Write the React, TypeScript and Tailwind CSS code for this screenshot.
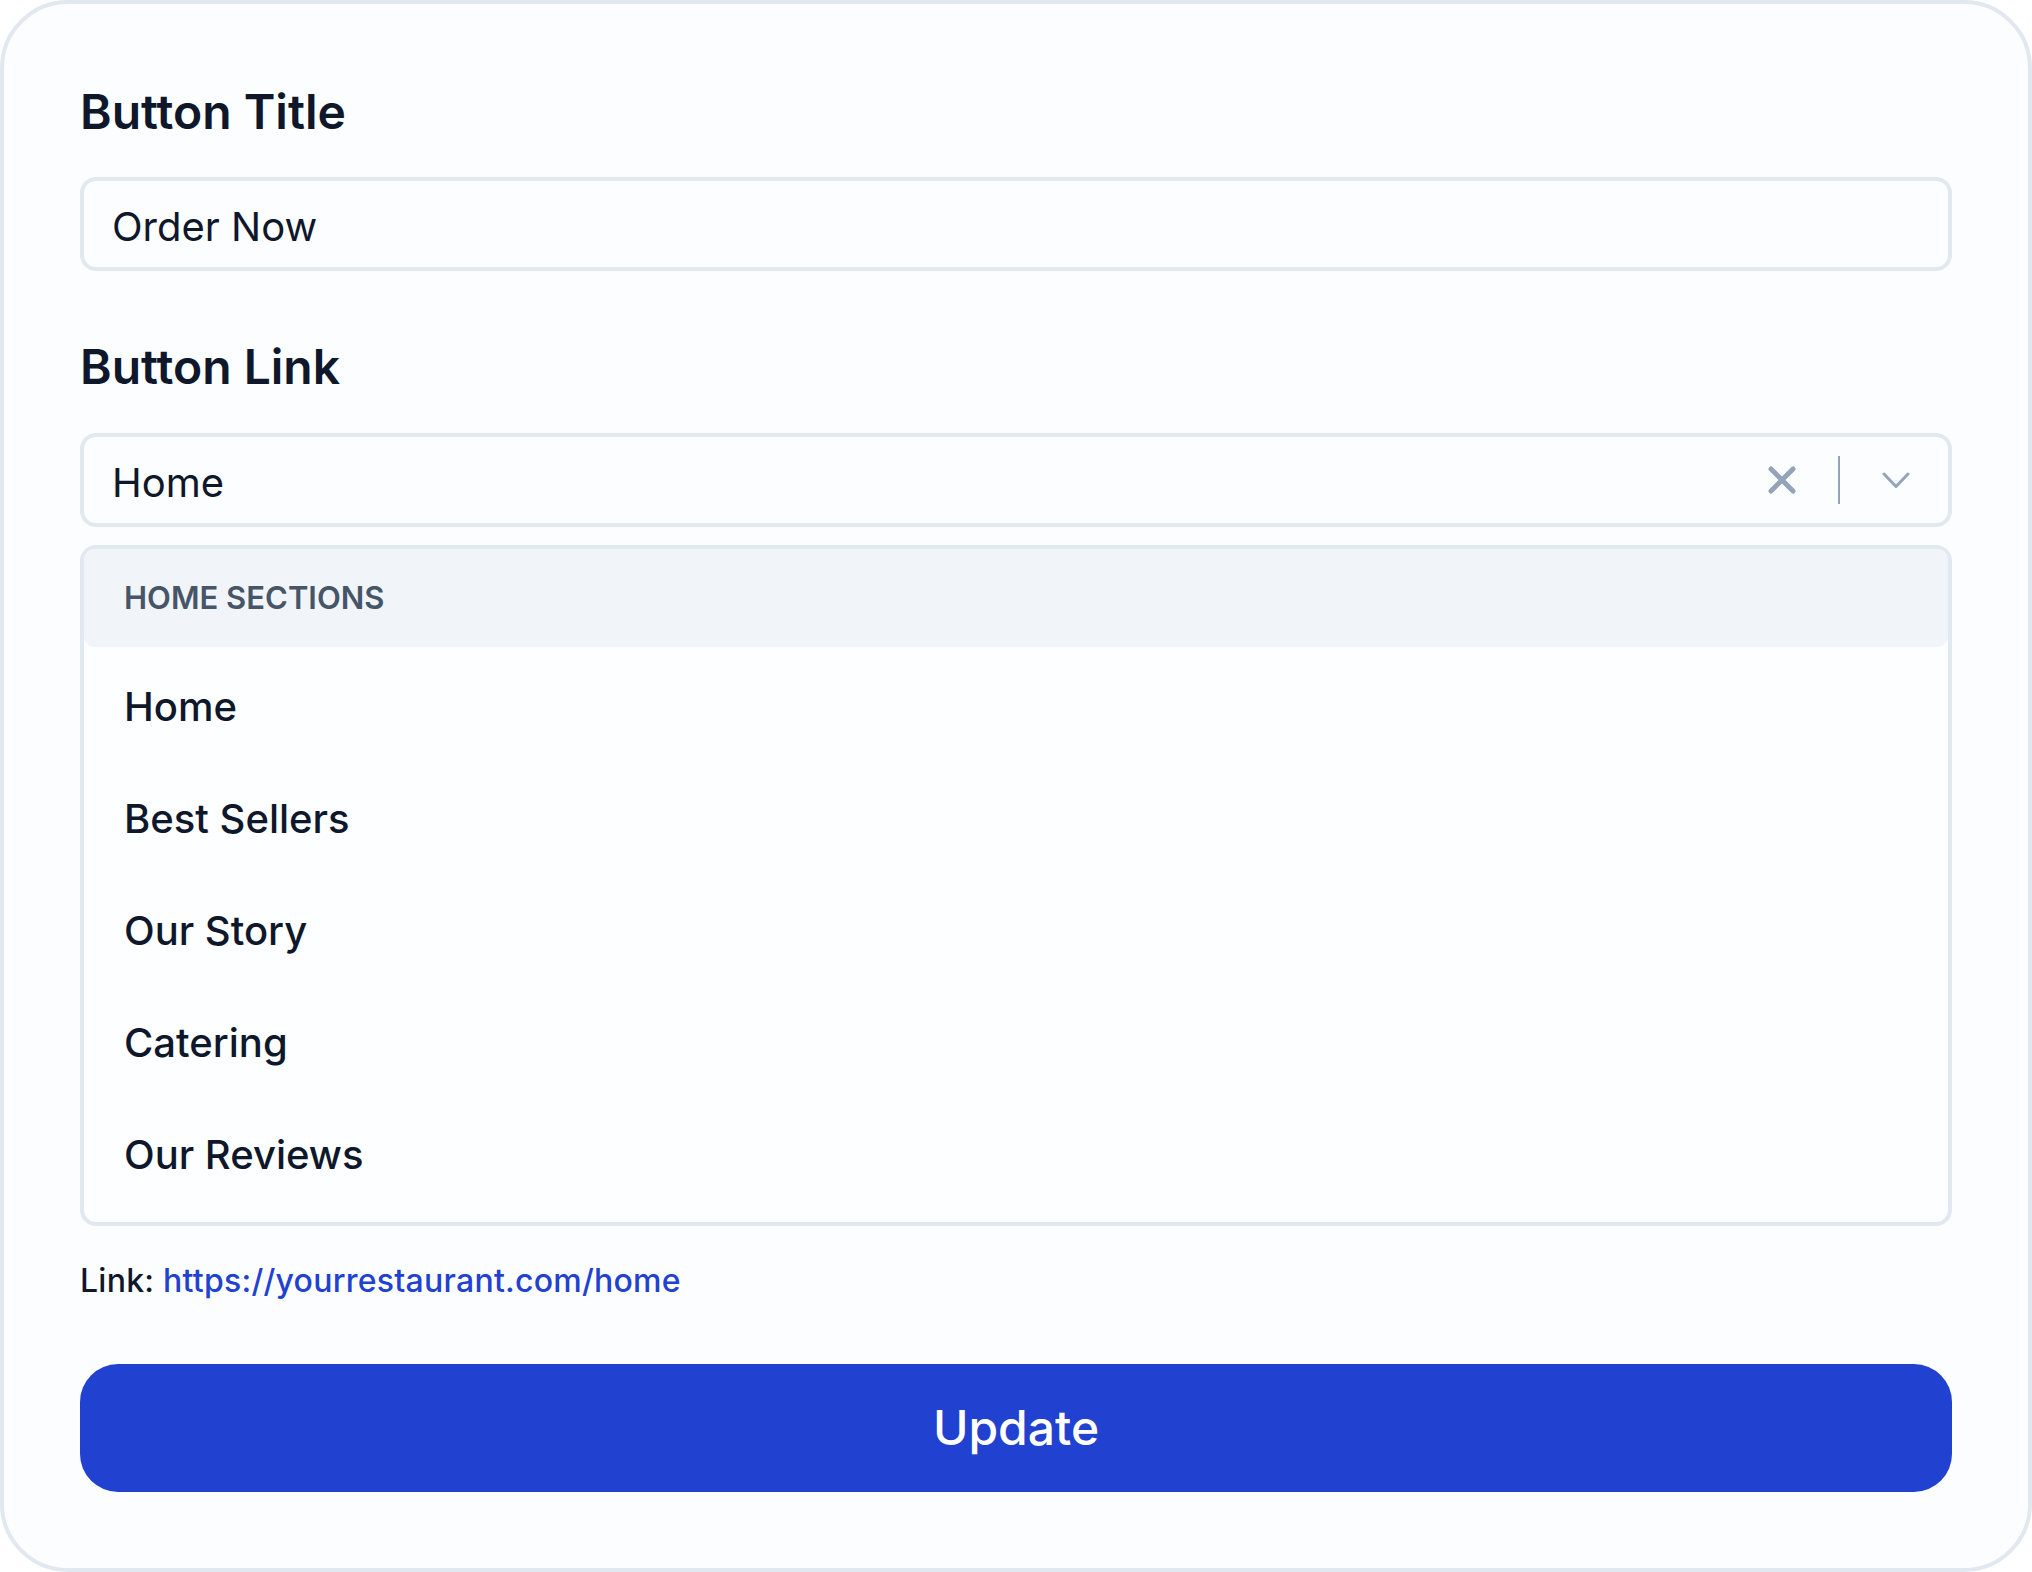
import React from "react";

const sections = ["Home", "Best Sellers", "Our Story", "Catering", "Our Reviews"];

function ClearIcon() {
  return (
    <svg width="28" height="28" viewBox="0 0 28 28" fill="none" aria-hidden="true">
      <path d="M3 3 L25 25 M25 3 L3 25" stroke="#94a3b8" strokeWidth="5" strokeLinecap="round" />
    </svg>
  );
}

function ChevronIcon() {
  return (
    <svg width="28" height="17" viewBox="0 0 28 17" fill="none" aria-hidden="true">
      <path d="M2 2 L14 14.5 L26 2" stroke="#94a3b8" strokeWidth="3" strokeLinecap="round" strokeLinejoin="round" />
    </svg>
  );
}

export default function App() {
  return (
    <div className="min-h-screen bg-white" style={{ fontFamily: "Inter, 'Noto Sans', sans-serif" }}>
      <div className="box-border flex h-[1572px] w-full flex-col rounded-[68px] border-4 border-[#e2e8f0] bg-[#fcfdfe] px-[76px] pt-[76px] pb-[76px] text-[#0f172a]">
        <label className="block h-[60px] pt-[2px] text-[48px] font-semibold leading-[60px]">Button Title</label>
        <div className="mt-[37px] flex h-[94px] items-center rounded-[16px] border-4 border-[#e2e8f0] bg-[#fcfdfe] px-[28px] pt-[5px] text-[40px] leading-[60px]">
          Order Now
        </div>

        <label className="mt-[64px] block h-[60px] pt-[2px] text-[48px] font-semibold leading-[60px]">Button Link</label>
        <div className="mt-[38px] flex h-[94px] items-center rounded-[16px] border-4 border-[#e2e8f0] bg-[#fcfdfe] pl-[28px] text-[40px] leading-[60px]">
          <span className="flex-1 pt-[5px]">Home</span>
          <div className="flex items-center">
            <ClearIcon />
            <span className="mx-[42px] h-[48px] w-[2px] bg-[#94a3b8]" />
            <ChevronIcon />
          </div>
          <span className="w-[38px]" />
        </div>

        <div className="mt-[18px] flex h-[681px] flex-col rounded-[16px] border-4 border-[#e2e8f0] bg-[#fdfeff] pb-[15px]">
          <div className="flex h-[98px] items-center rounded-[10px] bg-[#f1f5f9] px-[40px] text-[31px] font-semibold uppercase text-[#475569]">
            Home Sections
          </div>
          {sections.map((s) => (
            <div key={s} className="flex h-[112px] items-center px-[40px] pt-[7px] text-[40px] font-medium">
              {s}
            </div>
          ))}
        </div>

        <p className="mt-[31px] h-[48px] text-[32px] font-medium leading-[48px] tracking-[0.25px]">
          Link: <span className="text-[#2141d0]">https://yourrestaurant.com/home</span>
        </p>

        <button className="mt-[59px] flex h-[128px] w-full items-center justify-center rounded-[38px] bg-[#2141d0] text-[48px] font-medium text-white">
          Update
        </button>
      </div>
    </div>
  );
}
